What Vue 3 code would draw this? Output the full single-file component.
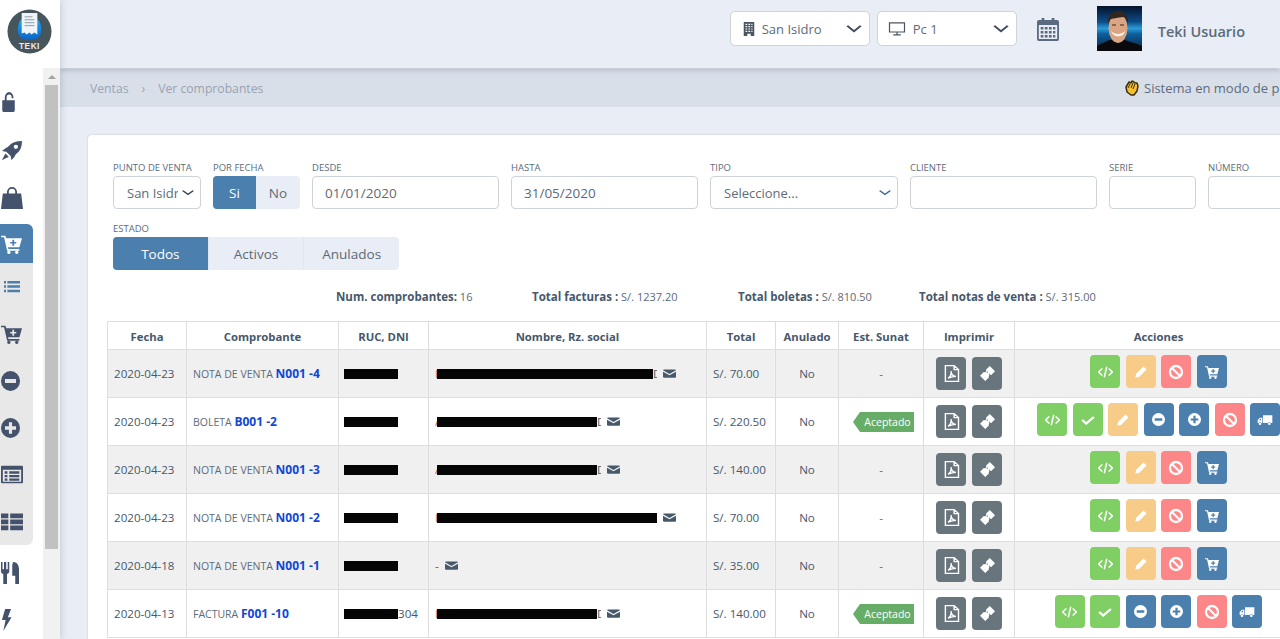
<template>
  <div class="app">
    <!-- barra lateral -->
    <aside class="sidebar">
      <div class="logo">
        <svg viewBox="0 0 46 46" class="logo-svg">
          <defs>
            <linearGradient id="logoBlue" x1="0" y1="0" x2="0" y2="1">
              <stop offset="0" stop-color="#1fa8f5" />
              <stop offset="1" stop-color="#0b62c4" />
            </linearGradient>
          </defs>
          <circle cx="23" cy="23" r="22.5" fill="#46565c" />
          <path d="M11 22c0-6 2-11 5-12h14c3 1 5 6 5 12 0 6-5 10-12 10s-12-4-12-10z" fill="url(#logoBlue)" />
          <path d="M15 4h16v22l-3-2-3 2-2-2-3 2-2-2-3 1z" fill="#eef3f7" />
          <path d="M18 8h8M18 11h10M18 14h10M18 17h10" stroke="#8b9aa5" stroke-width="1" />
          <text x="23" y="41" text-anchor="middle" class="logo-text">TEKI</text>
        </svg>
      </div>
      <div class="side-body">
        <nav class="nav">
          <div v-for="item in topMenu" :key="item" class="nav-item">
            <Icon :name="item" :class="'ni-' + item" />
          </div>
          <div class="nav-item active">
            <Icon name="cartPlus" class="ni-cartPlus" />
          </div>
          <div class="submenu">
            <div v-for="item in subMenu" :key="item" class="nav-item" :class="{ 'sub-blue': item === 'list' }">
              <Icon :name="item" :class="'ni-' + item" />
            </div>
          </div>
          <div class="nav-item after">
            <Icon name="utensils" class="ni-utensils" />
          </div>
          <div class="nav-item">
            <Icon name="bolt" class="ni-bolt" />
          </div>
        </nav>
        <div class="scrollbar">
          <div class="scroll-arrow"></div>
          <div class="scroll-thumb"></div>
        </div>
      </div>
    </aside>

    <main class="main">
      <!-- cabecera -->
      <header class="topbar">
        <div class="top-select">
          <Icon name="building" class="ts-ico" />
          <span>San Isidro</span>
          <Icon name="chevron" class="ts-chev" />
        </div>
        <div class="top-select">
          <Icon name="monitor" class="ts-ico wide" />
          <span>Pc 1</span>
          <Icon name="chevron" class="ts-chev" />
        </div>
        <Icon name="calendar" class="cal" />
        <svg viewBox="0 0 45 45" class="avatar">
          <defs>
            <linearGradient id="sky" x1="0" y1="0" x2="0" y2="1">
              <stop offset="0" stop-color="#04122c" />
              <stop offset="0.35" stop-color="#0d4c86" />
              <stop offset="0.5" stop-color="#2a9bd8" />
              <stop offset="0.62" stop-color="#0f5f9c" />
              <stop offset="1" stop-color="#06233f" />
            </linearGradient>
          </defs>
          <rect width="45" height="45" fill="url(#sky)" />
          <path d="M0 45v-5c5-3 9-4 12-6h16c4 2 11 3 17 6v5z" fill="#0a0a0c" />
          <ellipse cx="21" cy="22" rx="9.500" ry="15" fill="#d9a583" />
          <path d="M11 18c-1-9 4-13 10-13s11 4 10 13c-1-4-3-7-5-7-4 1-12 1-13 3z" fill="#33261f" />
          <path d="M14 25c4 4 10 4 14 0-1 7-12 7-14 0z" fill="#f8f3ea" />
          <path d="M15 19h4M23 19h4" stroke="#3c2a22" stroke-width="1.200" />
        </svg>
        <span class="user">Teki Usuario</span>
      </header>

      <div class="breadcrumb">
        <div class="crumbs">
          <span>Ventas</span>
          <span class="crumb-sep">›</span>
          <span>Ver comprobantes</span>
        </div>
        <div class="notice">
          <svg viewBox="0 0 16 16" class="hand">
            <path d="M2 7l3-5 2 1 1-2 2 1 1 1 2 0 1 3-1 5-3 4H7L3 12z" fill="#f6c02c" stroke="#3b2f14" stroke-width="1.500" stroke-linejoin="round" />
            <path d="M6 4l-2 4M9 3L7 8M11 4L9 9" stroke="#3b2f14" stroke-width="1" />
          </svg>
          Sistema en modo de prueba
        </div>
      </div>

      <section class="content">
        <div class="card">
          <!-- filtros -->
          <div class="filters">
            <div class="field w88">
              <label>PUNTO DE VENTA</label>
              <div class="select"><span class="clip">San Isidro</span><Icon name="chevron" class="sel-chev" /></div>
            </div>
            <div class="field w87">
              <label>POR FECHA</label>
              <div class="btn-group">
                <span class="on">Si</span>
                <span>No</span>
              </div>
            </div>
            <div class="field w187">
              <label>DESDE</label>
              <input class="input" value="01/01/2020" />
            </div>
            <div class="field w187">
              <label>HASTA</label>
              <input class="input" value="31/05/2020" />
            </div>
            <div class="field w188">
              <label>TIPO</label>
              <div class="select"><span class="clip">Seleccione...</span><Icon name="chevron" class="sel-chev tint" /></div>
            </div>
            <div class="field w187">
              <label>CLIENTE</label>
              <input class="input" />
            </div>
            <div class="field w87">
              <label>SERIE</label>
              <input class="input" />
            </div>
            <div class="field w187">
              <label>NÚMERO</label>
              <input class="input" />
            </div>
          </div>

          <div class="estado">
            <label>ESTADO</label>
            <div class="tabs">
              <span class="on">Todos</span>
              <span>Activos</span>
              <span>Anulados</span>
            </div>
          </div>

          <div class="summary">
            <div><b>Num. comprobantes:</b> 16</div>
            <div><b>Total facturas :</b> S/. 1237.20</div>
            <div><b>Total boletas :</b> S/. 810.50</div>
            <div><b>Total notas de venta :</b> S/. 315.00</div>
          </div>

          <table class="grid">
            <colgroup>
              <col v-for="w in colWidths" :key="w.k" :style="{ width: w.v + 'px' }" />
            </colgroup>
            <thead>
              <tr>
                <th>Fecha</th>
                <th>Comprobante</th>
                <th>RUC, DNI</th>
                <th>Nombre, Rz. social</th>
                <th>Total</th>
                <th>Anulado</th>
                <th>Est. Sunat</th>
                <th>Imprimir</th>
                <th>Acciones</th>
              </tr>
            </thead>
            <tbody>
              <tr v-for="r in rows" :key="r.num">
                <td>{{ r.date }}</td>
                <td class="doc"><span class="doc-type">{{ r.type }}</span> <b>{{ r.num }}</b></td>
                <td class="ruc"><span class="bar bar-ruc"></span>{{ r.rucEnd }}</td>
                <td class="name">
                  <span class="name-in">
                    <span v-if="r.pre" class="pre">{{ r.pre }}</span>
                    <span v-if="r.bar" class="bar" :style="{ width: r.bar + 'px' }"></span>
                    <span v-if="r.post" class="post">{{ r.post }}</span>
                    <span v-if="!r.bar">-</span>
                    <Icon name="mail" class="mail" />
                  </span>
                </td>
                <td>{{ r.total }}</td>
                <td class="center">No</td>
                <td class="center">
                  <span v-if="r.ok" class="tag">Aceptado</span>
                  <span v-else class="dash">-</span>
                </td>
                <td class="center">
                  <div class="prints">
                    <span class="act gray"><Icon name="pdf" class="ai-pdf" /></span>
                    <span class="act gray"><Icon name="ticket" class="ai-ticket" /></span>
                  </div>
                </td>
                <td class="center">
                  <div class="acts">
                    <span v-for="(a, i) in r.acts" :key="i" class="act" :class="actions[a]">
                      <Icon :name="a" :class="'ai-' + a" />
                    </span>
                  </div>
                </td>
              </tr>
            </tbody>
          </table>
        </div>
      </section>
    </main>
  </div>
</template>

<script setup>
import { h } from 'vue'

// iconos dibujados a mano en una grilla de 24
const icons = {
  unlock: 'M2 10h20v12a2 2 0 0 1-2 2H4a2 2 0 0 1-2-2zM6 10V7a7 7 0 0 1 14 0v0.500h-3V7a4 4 0 0 0-8 0v3z',
  rocket: 'M24 0c-7 0-12 2-15 6-1 1-2 2-3 2l-5 4 5 1 5 5 1 5 4-5c0-1 1-2 2-3 4-3 6-8 6-15zM17 4.500a2.500 2.500 0 1 1 0 5 2.500 2.500 0 0 1 0-5zM5 15l4 4-8 4z',
  bag: 'M2 7h20l2 17H0zM6.500 7V5.500a5.500 5.500 0 0 1 11 0V7h-2V5.500a3.500 3.500 0 0 0-7 0V7z',
  cartPlus: 'M0 2h5l1 3h18l-3 11H8l.5 2H21v2H7L3.500 4H0zM13 7h2v2.500h2.500v2H15V14h-2v-2.500h-2.500v-2H13zM7 22a2 2 0 1 0 4 0 2 2 0 1 0-4 0zM16 22a2 2 0 1 0 4 0 2 2 0 1 0-4 0z',
  list: 'M0 3h3v4H0zM5 3h19v4H5zM0 10h3v4H0zM5 10h19v4H5zM0 17h3v4H0zM5 17h19v4H5z',
  minus: 'M12 0a12 12 0 1 0 0 24 12 12 0 0 0 0-24zM5 9.500h14v5H5z',
  plus: 'M12 0a12 12 0 1 0 0 24 12 12 0 0 0 0-24zM10 5h4v5h5v4h-5v5h-4v-5H5v-4h5z',
  listAlt: 'M1 1h22a1 1 0 0 1 1 1v20a1 1 0 0 1-1 1H1a1 1 0 0 1-1-1V2a1 1 0 0 1 1-1zM2 6v15h20V6zM4 8h3v3H4zM9 8h11v3H9zM4 12.500h3v3H4zM9 12.500h11v3H9zM4 17h3v3H4zM9 17h11v3H9z',
  thList: 'M0 2h8v6H0zM10 2h14v6H10zM0 9.500h8v6H0zM10 9.500h14v6H10zM0 17h8v6H0zM10 17h14v6H10z',
  utensils: 'M0 0h2v8h2V0h3v8h2V0h2v10c0 2-2 3-3 3v11H3V13c-1 0-3-1-3-3zM16 0c5 0 8 3 8 8v16h-5v-9h-4V3z',
  bolt: 'M9 0h13l-7 9h8L5 24l5-12H2z',
  building: 'M3 0h18v24h-6v-4H9v4H3zM6 3v2h3V3zM11 3v2h3V3zM16 3v2h2V3zM6 7v2h3V7zM11 7v2h3V7zM16 7v2h2V7zM6 11v2h3v-2zM11 11v2h3v-2zM16 11v2h2v-2zM6 15v2h3v-2zM11 15v2h3v-2zM16 15v2h2v-2z',
  calendar: 'M2 3h3V1h3v2h8V1h3v2h3a2 2 0 0 1 2 2v17a2 2 0 0 1-2 2H2a2 2 0 0 1-2-2V5a2 2 0 0 1 2-2zM2 8v14h20V8zM4 10h3v2.500H4zM8.500 10h3v2.500h-3zM13 10h3v2.500h-3zM17.500 10H20v2.500h-2.500zM4 14h3v2.500H4zM8.500 14h3v2.500h-3zM13 14h3v2.500h-3zM17.500 14H20v2.500h-2.500zM4 18h3v2.500H4zM8.500 18h3v2.500h-3zM13 18h3v2.500h-3zM17.500 18H20v2.500h-2.500z',
  mail: 'M2 3h20a2 2 0 0 1 2 2L12 13 0 5a2 2 0 0 1 2-2zM0 8l12 8 12-8v11a2 2 0 0 1-2 2H2a2 2 0 0 1-2-2z',
  pencil: 'M17 1l6 6L8 22l-7 1 1-7z',
  ticket: 'M15.600 0L24 8.400l-6 6a2.500 2.500 0 0 0-3.500 3.500l-6.100 6.100L0 15.600l6-6a2.500 2.500 0 0 0 3.500-3.500zM10.500 9.500l1-1 1.500 1.500-1 1zM14 13l1-1 1.500 1.500-1 1z',
  truck: 'M9 4h14v13h-2a3 3 0 0 0-5 0H9zM8 8H4.500L1 12v5h1a3 3 0 0 1 5 0h1zM6 10v2.500H3.200L5 10zM2.500 18.500a2 2 0 1 0 4 0 2 2 0 1 0-4 0zM16.500 18.500a2 2 0 1 0 4 0 2 2 0 1 0-4 0z',
  chevron: 'M3 7l9 10 9-10',
  monitor: 'M2 4h20v13H2zM12 17v4M7 21h10',
  code: 'M7 6l-6 6 6 6M17 6l6 6-6 6M14 3l-4 18',
  check: 'M2 12l7 7L22 6',
  ban: 'M12 3a9 9 0 1 0 0 18 9 9 0 0 0 0-18zM5.600 5.600l12.800 12.800',
  pdf: 'M5 2h10l5 5v15H5zM15 2v5h5M8 18c3-2 4-6 3.500-9 0 3 2 6 5.500 6.500-3 0-6 1-9 2.500z'
}
const stroked = { chevron: 3.2, monitor: 1.6, code: 2.4, check: 4, ban: 3.4, pdf: 1.6 }

const Icon = ({ name }) => {
  const sw = stroked[name]
  return h('svg', { viewBox: '0 0 24 24', preserveAspectRatio: 'none' }, [
    h('path', sw
      ? { d: icons[name], fill: 'none', stroke: 'currentColor', 'stroke-width': sw }
      : { d: icons[name], fill: 'currentColor', 'fill-rule': 'evenodd' })
  ])
}
Icon.props = ['name']

const topMenu = ['unlock', 'rocket', 'bag']
const subMenu = ['list', 'cartPlus', 'minus', 'plus', 'listAlt', 'thList']

const colWidths = [79, 152, 90, 278, 69, 63, 85, 91, 288].map((v, k) => ({ k, v }))

// color de cada botón de acción
const actions = {
  code: 'green',
  check: 'green',
  pencil: 'orange',
  minus: 'blue',
  plus: 'blue',
  ban: 'red',
  cartPlus: 'blue',
  truck: 'blue'
}

const notaActs = ['code', 'pencil', 'ban', 'cartPlus']

const rows = [
  { date: '2020-04-23', type: 'NOTA DE VENTA', num: 'N001 -4', rucEnd: '', pre: 'F', bar: 216, post: 'D', total: 'S/. 70.00', ok: false, acts: notaActs },
  { date: '2020-04-23', type: 'BOLETA', num: 'B001 -2', rucEnd: '', pre: 'A', bar: 160, post: 'D', total: 'S/. 220.50', ok: true, acts: ['code', 'check', 'pencil', 'minus', 'plus', 'ban', 'truck'] },
  { date: '2020-04-23', type: 'NOTA DE VENTA', num: 'N001 -3', rucEnd: '', pre: 'A', bar: 160, post: 'D', total: 'S/. 140.00', ok: false, acts: notaActs },
  { date: '2020-04-23', type: 'NOTA DE VENTA', num: 'N001 -2', rucEnd: '', pre: 'E', bar: 220, post: '', total: 'S/. 70.00', ok: false, acts: notaActs },
  { date: '2020-04-18', type: 'NOTA DE VENTA', num: 'N001 -1', rucEnd: '', pre: '', bar: 0, post: '', total: 'S/. 35.00', ok: false, acts: notaActs },
  { date: '2020-04-13', type: 'FACTURA', num: 'F001 -10', rucEnd: '304', pre: 'E', bar: 160, post: 'D', total: 'S/. 140.00', ok: true, acts: ['code', 'check', 'minus', 'plus', 'ban', 'truck'] }
]
</script>

<style>
html, body {
  margin: 0;
  height: 100%;
  overflow: hidden;
}
</style>

<style scoped>
.app {
  display: flex;
  height: 639px;
  width: 1280px;
  overflow: hidden;
  font-family: "Open Sans", "Noto Sans", sans-serif;
  font-size: 12px;
  color: #47586b;
  background: #e9edf5;
}

/* barra lateral */
.sidebar {
  flex: none;
  width: 60px;
  background: #fff;
  display: flex;
  flex-direction: column;
  position: relative;
  z-index: 3;
  box-shadow: 2px 0 6px rgba(70, 85, 110, 0.18);
}
.logo {
  height: 68px;
  flex: none;
  display: flex;
  padding: 9px 0 0 7px;
  box-sizing: border-box;
}
.logo-svg {
  width: 45px;
  height: 45px;
}
.logo-text {
  font-family: "Liberation Sans", sans-serif;
  font-size: 8.500px;
  letter-spacing: 0.5px;
  font-weight: 700;
  fill: #e8eef1;
}
.side-body {
  flex: 1;
  display: flex;
  min-height: 0;
}
.nav {
  width: 43px;
  padding-top: 10px;
  box-sizing: border-box;
  color: #44526c;
}
.nav-item {
  height: 47px;
  display: flex;
  align-items: center;
  padding-left: 1px;
  box-sizing: border-box;
}
.nav > .nav-item:nth-child(2) {
  height: 52px;
}
.nav-item.active {
  height: 39px;
  width: 33px;
  background: #4a7fae;
  color: #fff;
  border-radius: 0 6px 0 0;
}
.submenu {
  width: 33px;
  background: #e8e8e8;
  border-radius: 0 0 6px 0;
}
.sub-blue {
  color: #4a7fae;
  padding-left: 4px;
}
.after {
  margin-top: 4px;
}
.ni-unlock { width: 15px; height: 20px; }
.ni-rocket { width: 21px; height: 20px; }
.ni-bag { width: 22px; height: 22px; margin-bottom: 6px; }
.ni-cartPlus { width: 21px; height: 20px; }
.ni-list { width: 16px; height: 15px; }
.ni-minus { width: 19px; height: 20px; }
.ni-plus { width: 19px; height: 20px; }
.ni-listAlt { width: 22px; height: 19px; }
.ni-thList { width: 22px; height: 19px; }
.ni-utensils { width: 18px; height: 22px; }
.ni-bolt { width: 11px; height: 22px; }

.scrollbar {
  width: 17px;
  background: #f1f1f1;
}
.scroll-arrow {
  height: 17px;
  display: flex;
  justify-content: center;
}
.scroll-arrow::before {
  content: '';
  margin-top: 7px;
  border-left: 4px solid transparent;
  border-right: 4px solid transparent;
  border-bottom: 4px solid #a3a3a3;
  height: 0;
}
.scroll-thumb {
  margin: 0 2px;
  height: 464px;
  background: #c1c1c1;
}

/* contenido */
.main {
  flex: 1;
  min-width: 0;
  display: flex;
  flex-direction: column;
  overflow: hidden;
}
.topbar {
  height: 68px;
  flex: none;
  display: flex;
  align-items: center;
  justify-content: flex-end;
  padding-right: 35px;
  box-sizing: border-box;
  position: relative;
  z-index: 2;
  box-shadow: 0 2px 5px rgba(80, 95, 120, 0.3);
}
.top-select {
  width: 140px;
  height: 35px;
  margin-right: 7px;
  margin-top: -11px;
  box-sizing: border-box;
  background: #fff;
  border: 1px solid #ced3d9;
  border-radius: 5px;
  display: flex;
  align-items: center;
  padding: 0 6px 0 11px;
  font-size: 13px;
  color: #5c6b78;
}
.ts-ico {
  width: 14px;
  height: 14px;
  margin-right: 6px;
  color: #4a5561;
}
.ts-ico.wide {
  width: 18px;
  height: 17px;
  margin: 0 7px 0 -1px;
}
.ts-chev {
  width: 18px;
  height: 13px;
  margin-left: auto;
  color: #3f4d5e;
}
.cal {
  width: 22px;
  height: 24px;
  margin: -11px 38px 0 13px;
  color: #5a6a80;
}
.avatar {
  width: 45px;
  height: 45px;
  margin: -11px 16px 0 0;
}
.user {
  font-size: 14.500px;
  font-weight: 600;
  color: #5c6b7c;
  margin-top: -6px;
  white-space: nowrap;
}
.breadcrumb {
  height: 38px;
  flex: none;
  margin-top: 1px;
  background: #d8dfe9;
  display: flex;
  align-items: center;
  padding-left: 30px;
  white-space: nowrap;
  font-size: 12.200px;
  color: #98a3b0;
}
.crumbs {
  width: 1034px;
  flex: none;
}
.crumb-sep {
  margin: 0 13px;
}
.notice {
  flex: none;
  display: flex;
  align-items: center;
  gap: 4px;
  font-size: 13px;
  color: #5c6b7c;
}
.hand {
  width: 16px;
  height: 16px;
}
.content {
  flex: 1;
  padding: 28px 0 0 28px;
  min-height: 0;
}
.card {
  width: 1233px;
  height: 600px;
  box-sizing: border-box;
  background: #fff;
  border-radius: 4px;
  padding: 27px 19px 0;
  box-shadow: 0 0 2px rgba(60, 70, 90, 0.25);
}
.filters {
  display: flex;
  gap: 12px;
  padding-left: 6px;
}
.field {
  flex: none;
}
.w88 { width: 88px; }
.w87 { width: 87px; }
.w187 { width: 187px; }
.w188 { width: 188px; }
label {
  display: block;
  font-size: 9.500px;
  line-height: 12px;
  margin-bottom: 2px;
  color: #5d6c7b;
}
.input,
.select {
  display: flex;
  align-items: center;
  width: 100%;
  height: 33px;
  box-sizing: border-box;
  background: #fff;
  border: 1px solid #ced3d9;
  border-radius: 4px;
  padding: 0 12px 0 13px;
  font-family: inherit;
  font-size: 13px;
  color: #5c6b78;
  outline: none;
}
.input {
  padding-left: 12px;
  font-size: 13.500px;
}
.clip {
  flex: 1;
  min-width: 0;
  overflow: hidden;
  white-space: nowrap;
}
.sel-chev {
  flex: none;
  width: 14px;
  height: 9px;
  margin: 0 -7px 0 3px;
  color: #3a4756;
}
.sel-chev.tint {
  color: #3f6d96;
}
.btn-group,
.tabs {
  display: flex;
  height: 33px;
  border-radius: 4px;
  overflow: hidden;
  font-size: 13.500px;
  background: #e9edf5;
}
.btn-group span,
.tabs span {
  flex: 1;
  display: flex;
  align-items: center;
  justify-content: center;
  color: #5c6b78;
}
.tabs span + span {
  border-left: 1px solid #e2e6ef;
}
.btn-group .on,
.tabs .on {
  background: #4a7fae;
  color: #fff;
}
.btn-group .on {
  flex: 0 0 43px;
}
.estado {
  margin: 14px 0 0 6px;
  width: 286px;
}
.summary {
  display: grid;
  grid-template-columns: 196px 206px 181px auto;
  margin-top: 18px;
  padding-left: 229px;
  line-height: 18px;
  font-size: 11px;
  color: #5c6b78;
}
.summary b {
  font-size: 11.500px;
  font-weight: 700;
  color: #47586b;
}

/* tabla */
.grid {
  margin-top: 15px;
  width: 1195px;
  table-layout: fixed;
  border-collapse: collapse;
  font-size: 11.600px;
}
.grid th,
.grid td {
  border: 1px solid #dedede;
  box-sizing: border-box;
  white-space: nowrap;
}
.grid th {
  height: 28px;
  padding: 1px 6px 0;
  font-weight: 700;
  font-size: 11.300px;
  color: #47586b;
}
.grid td {
  height: 48px;
  padding: 0 6px;
}
.grid td.ruc {
  padding-left: 5px;
}
.grid tbody tr:nth-child(odd) {
  background: #f0f0f0;
}
.center {
  text-align: center;
}
.dash {
  color: #3f6d96;
}
.doc {
  font-size: 10.500px;
}
.doc b {
  font-size: 12px;
  color: #0f46d8;
}
.doc-type {
  color: #5c6b78;
}
.bar {
  display: inline-block;
  height: 10px;
  background: #050505;
  flex: none;
}
.bar-ruc {
  width: 54px;
  vertical-align: -1px;
}
.name-in {
  display: flex;
  align-items: center;
}
.pre {
  width: 2px;
  overflow: hidden;
  color: #c2705a;
}
.post {
  width: 4px;
  overflow: hidden;
}
.mail {
  width: 13px;
  height: 11px;
  margin-left: 6px;
  color: #47586b;
}
.tag {
  position: relative;
  display: inline-block;
  margin-left: 12px;
  padding: 0 3px 0 4px;
  height: 20px;
  line-height: 20px;
  background: #66ad68;
  color: #fff;
  font-size: 10.500px;
}
.tag::before {
  content: '';
  position: absolute;
  left: -7px;
  top: 0;
  border-top: 10px solid transparent;
  border-bottom: 10px solid transparent;
  border-right: 7px solid #66ad68;
}
.prints {
  display: flex;
  justify-content: center;
  gap: 6px;
}
.acts {
  display: flex;
  justify-content: center;
  gap: 5.500px;
  margin-top: -4px;
}
.act {
  flex: none;
  width: 30px;
  height: 33px;
  border-radius: 4px;
  display: flex;
  align-items: center;
  justify-content: center;
  color: #fff;
}
.ai-pdf { width: 21px; height: 19px; }
.ai-ticket { width: 15px; height: 15px; }
.ai-code { width: 15px; height: 14px; }
.ai-check { width: 14px; height: 12px; }
.ai-pencil { width: 12px; height: 12px; }
.ai-ban { width: 16px; height: 16px; }
.ai-minus,
.ai-plus { width: 13px; height: 13px; }
.ai-cartPlus { width: 14px; height: 14px; }
.ai-truck { width: 16px; height: 14px; }
.gray { background: #68757c; }
.green { background: #7fcf65; }
.orange { background: #f6cc88; }
.red { background: #fd8788; }
.blue { background: #4a7fae; }
</style>
